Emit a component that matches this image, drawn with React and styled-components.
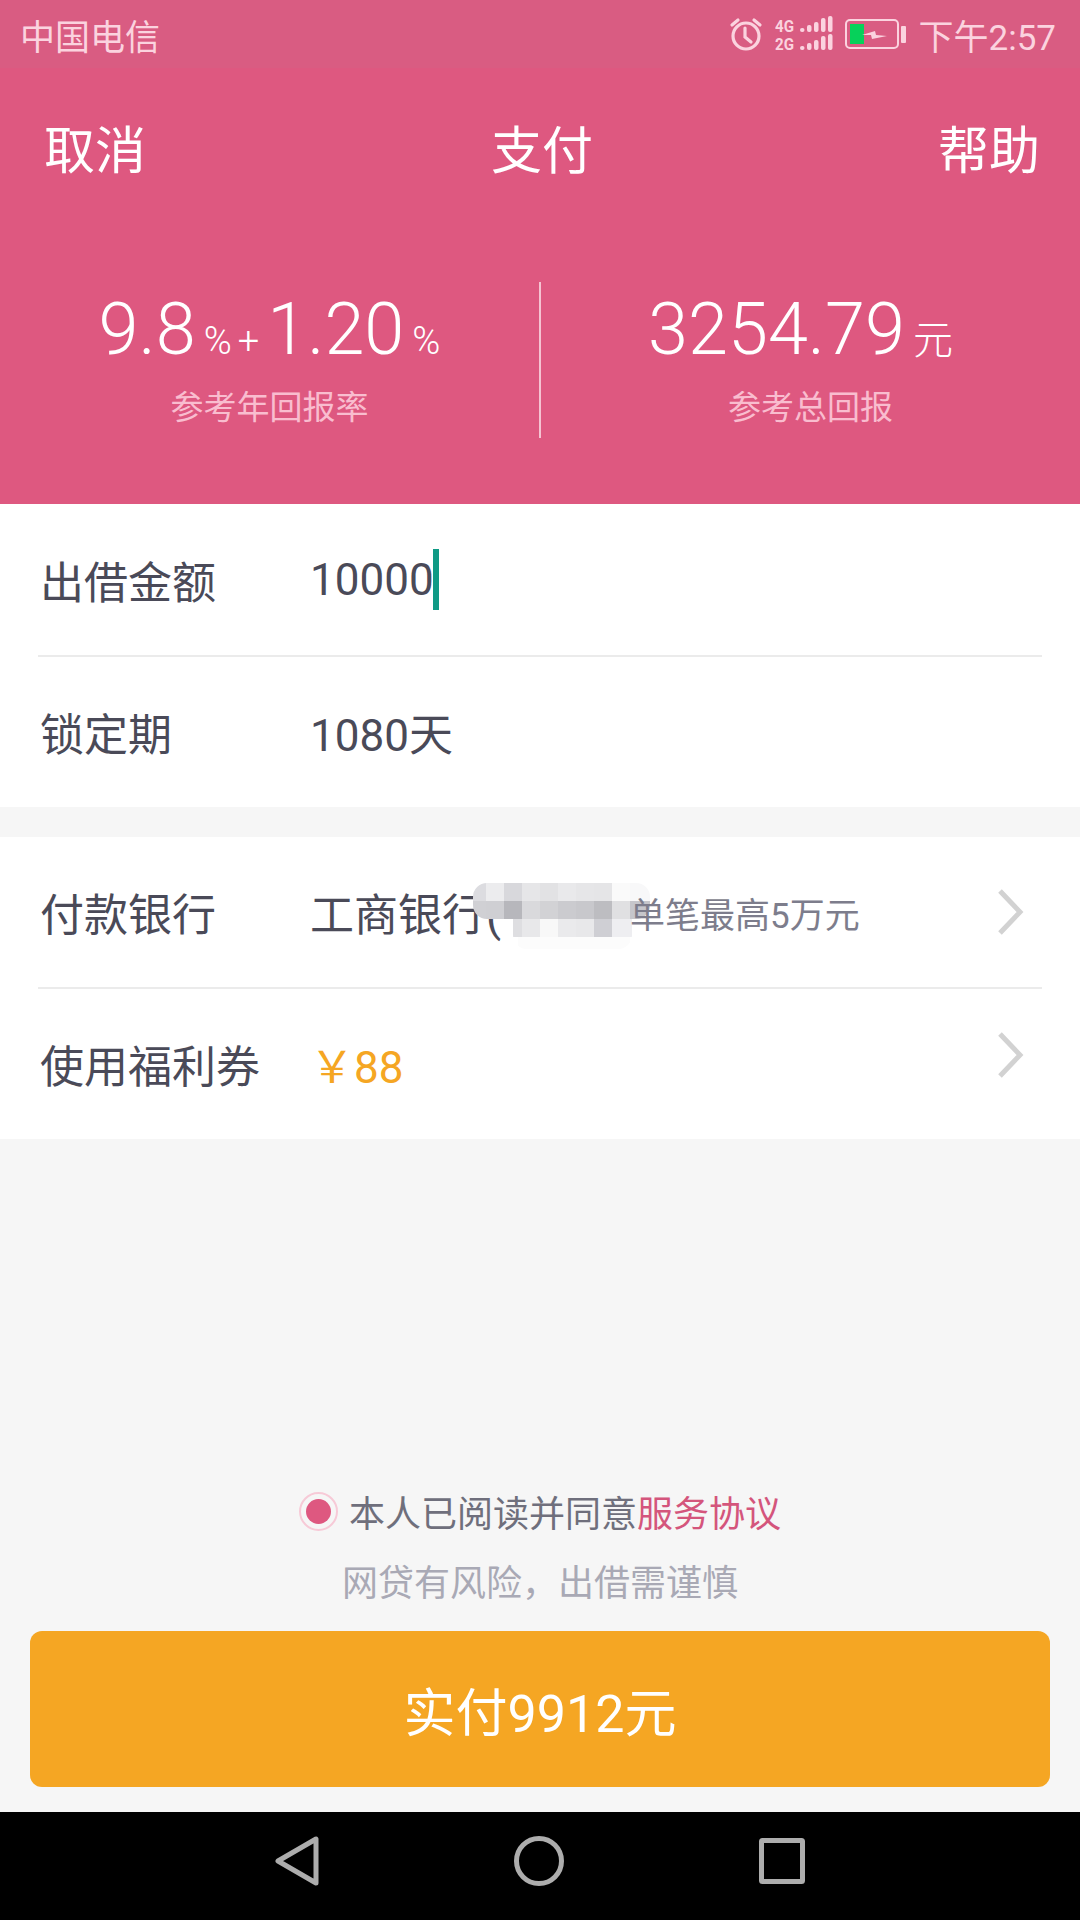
import React from "react";
import styled, { createGlobalStyle } from "styled-components";

const Global = createGlobalStyle`
  html, body { margin: 0; padding: 0; background: #f6f6f6; }
  * { box-sizing: border-box; }
  body { font-family: Roboto, "Noto Sans CJK SC", sans-serif; }
`;

const Screen = styled.div`
  width: 1080px;
  height: 1920px;
  display: flex;
  flex-direction: column;
  background: #f6f6f6;
  overflow: hidden;
`;
const StatusBar = styled.div`
  height: 68px;
  flex: none;
  background: #d95c82;
  color: #fbd3df;
  display: flex;
  align-items: center;
  justify-content: space-between;
  padding: 0 24px 0 20px;
  font-size: 35px;
`;
const StatusRight = styled.div`
  display: flex;
  align-items: center;
  gap: 12px;
`;
const Hero = styled.header`
  height: 436px;
  flex: none;
  background: #de5880;
  color: #fff;
  display: flex;
  flex-direction: column;
`;
const Nav = styled.nav`
  display: flex;
  justify-content: space-between;
  align-items: center;
  padding: 0 40px 0 44px;
  height: 158px;
  font-size: 51px;
`;
const Stats = styled.div`
  display: grid;
  grid-template-columns: 1fr 2px 1fr;
  height: 156px;
  margin-top: 56px;
`;
const Rule = styled.div`
  background: #f5c3d2;
`;
const Stat = styled.div`
  display: flex;
  flex-direction: column;
  align-items: center;
`;
const Figures = styled.div`
  display: flex;
  align-items: baseline;
  height: 96px;
  padding-right: ${(p) => p.$shift || 0}px;
  font-size: 72px;
  line-height: 96px;
  font-weight: 300;
`;
const Unit = styled.span`
  font-size: ${(p) => p.$size || 38}px;
  margin: 0 ${(p) => p.$after || 0}px 0 ${(p) => p.$before || 8}px;
`;
const StatLabel = styled.div`
  font-size: 33px;
  line-height: 44px;
  margin-top: 8px;
  color: #f9bdcf;
`;
const Card = styled.section`
  background: #fff;
  flex: none;
  margin-top: ${(p) => p.$gap || 0}px;
`;
const Row = styled.div`
  position: relative;
  display: flex;
  align-items: center;
  height: ${(p) => p.$h || 150}px;
  padding: 0 0 0 40px;
  font-size: 44px;
  color: #4a4a58;
`;
const Divider = styled.div`
  height: 2px;
  margin: 0 38px;
  background: #ebebeb;
`;
const Label = styled.div`
  width: 270px;
  flex: none;
`;
const Value = styled.div`
  display: flex;
  align-items: center;
  color: ${(p) => p.$color || "#4a4a58"};
`;
const Caret = styled.span`
  width: 6px;
  height: 61px;
  background: #0f9a85;
  margin-left: -1px;
`;
const Note = styled.span`
  position: absolute;
  left: 630px;
  top: 50%;
  transform: translateY(-50%);
  font-size: 35px;
  color: #7d7d8c;
`;
const Mosaic = styled.svg`
  position: absolute;
  left: 473px;
  top: 46px;
`;
const Chevron = styled.svg`
  position: absolute;
  right: 56px;
  top: ${(p) => p.$top}px;
`;
const Footer = styled.footer`
  margin-top: auto;
  flex: none;
  display: flex;
  flex-direction: column;
  align-items: center;
  padding: 0 30px 25px;
`;
const Agree = styled.div`
  display: flex;
  align-items: center;
  gap: 11px;
  height: 40px;
  font-size: 36px;
  color: #6f6f7c;
`;
const Radio = styled.span`
  width: 39px;
  height: 39px;
  border-radius: 50%;
  border: 2px solid #f7cad7;
  display: flex;
  align-items: center;
  justify-content: center;
  &::after {
    content: "";
    width: 25px;
    height: 25px;
    border-radius: 50%;
    background: #de5880;
  }
`;
const Link = styled.span`
  color: #d4557c;
`;
const Warn = styled.div`
  font-size: 36px;
  line-height: 44px;
  margin-top: 31px;
  color: #a9a9b5;
`;
const PayButton = styled.button`
  width: 100%;
  height: 156px;
  margin-top: 25px;
  border: 0;
  border-radius: 12px;
  background: #f5a623;
  color: #fff;
  font: inherit;
  font-size: 52px;
`;
const SoftKeys = styled.div`
  height: 108px;
  flex: none;
  background: #000;
  display: flex;
  align-items: center;
  justify-content: center;
  gap: 195px;
  padding-bottom: 11px;
`;

const Clock = () => (
  <svg width="34" height="34" viewBox="0 0 34 34" fill="none" stroke="#fbd3df" strokeWidth="3.2" strokeLinecap="round">
    <circle cx="17" cy="19" r="13" />
    <path d="M16 11v9l6 5M3 8l6-5M31 8l-6-5" />
  </svg>
);

const SignalBars = ({ y, label }) => (
  <g>
    <text x="0" y={y} fontFamily="Roboto" fontWeight="700" fontSize="17" textLength="19" lengthAdjust="spacingAndGlyphs" fill="#fbd3df">{label}</text>
    {[[25, 4], [32, 7], [39, 10], [46, 14], [53, 16]].map(([x, h]) => (
      <rect key={x} x={x} y={y - h} width="4.5" height={h} rx="2" fill="#fbd3df" />
    ))}
  </g>
);
const Signal = () => (
  <svg width="58" height="36" viewBox="0 0 58 36">
    <SignalBars y={16} label="4G" />
    <SignalBars y={34} label="2G" />
  </svg>
);
const Battery = () => (
  <svg width="62" height="32" viewBox="0 0 62 32" fill="none">
    <rect x="1" y="2" width="52" height="28" rx="4" stroke="#fbd3df" strokeWidth="2" />
    <rect x="5" y="6" width="14" height="20" fill="#06d15a" />
    <path d="M17 17l13-4 1 4 11 1-15 3-1-4z" fill="#fbd3df" />
    <rect x="56" y="8" width="5" height="17" rx="1" fill="#fbd3df" />
  </svg>
);

const mosaicRows = [
  { y: 0, h: 18, x: 0, cells: [[13, "#dcdce0"], [18, "#ececee"], [18, "#d8d8dc"], [18, "#e6e6e8"], [18, "#e2e2e4"], [18, "#e9e9eb"], [18, "#e6e6e8"], [18, "#e5e5e7"], [18, "#fafafa"], [20, "#f8f8f9"]] },
  { y: 18, h: 18, x: 0, cells: [[13, "#d0d0d4"], [18, "#cfcfd3"], [18, "#b7b7bc"], [18, "#d9d9dc"], [18, "#d2d2d5"], [18, "#cbcbcf"], [18, "#c8c8cc"], [18, "#bdbdc1"], [18, "#e0e0e2"], [20, "#c6c6cb"]] },
  { y: 36, h: 18, x: 40, cells: [[9, "#dedee1"], [18, "#e8e8ea"], [18, "#f8f8f8"], [18, "#eaeaec"], [18, "#e8e8ea"], [18, "#cfcfd4"], [20, "#eeeef1"]] },
  { y: 54, h: 12, x: 45, cells: [[112, "#fcfcfc"]] },
];
const BlurPatch = () => (
  <Mosaic width="177" height="68" viewBox="0 0 177 68">
    <defs>
      <clipPath id="patch">
        <rect x="0" y="0" width="177" height="36" rx="14" />
        <rect x="40" y="20" width="119" height="46" rx="14" />
      </clipPath>
    </defs>
    <g clipPath="url(#patch)">
      {mosaicRows.map((row) => {
        let x = row.x;
        return row.cells.map(([w, c]) => {
          const r = <rect key={`${row.y}-${x}`} x={x} y={row.y} width={w} height={row.h} fill={c} />;
          x += w;
          return r;
        });
      })}
    </g>
  </Mosaic>
);

const Arrow = ({ top }) => (
  <Chevron $top={top} width="26" height="46" viewBox="0 0 26 46" fill="none">
    <path d="M2 2l20 21L2 44" stroke="#d2d2d2" strokeWidth="5" />
  </Chevron>
);

export default function App() {
  return (
    <Screen>
      <Global />
      <StatusBar>
        <span>中国电信</span>
        <StatusRight>
          <Clock />
          <Signal />
          <Battery />
          <span>下午2:57</span>
        </StatusRight>
      </StatusBar>
      <Hero>
        <Nav>
          <span>取消</span>
          <span>支付</span>
          <span>帮助</span>
        </Nav>
        <Stats>
          <Stat>
            <Figures>
              9.8<Unit>%</Unit><Unit $before={6} $after={8}>+</Unit>1.20<Unit>%</Unit>
            </Figures>
            <StatLabel>参考年回报率</StatLabel>
          </Stat>
          <Rule />
          <Stat>
            <Figures $shift={20}>
              3254.79<Unit $size={40}>元</Unit>
            </Figures>
            <StatLabel>参考总回报</StatLabel>
          </Stat>
        </Stats>
      </Hero>
      <Card>
        <Row $h={151}>
          <Label>出借金额</Label>
          <Value>10000<Caret /></Value>
        </Row>
        <Divider />
        <Row>
          <Label>锁定期</Label>
          <Value>1080天</Value>
        </Row>
      </Card>
      <Card $gap={30}>
        <Row $h={150}>
          <Label>付款银行</Label>
          <Value>工商银行(</Value>
          <BlurPatch />
          <Note>单笔最高5万元</Note>
          <Arrow top={52} />
        </Row>
        <Divider />
        <Row>
          <Label>使用福利券</Label>
          <Value $color="#f5a623">￥88</Value>
          <Arrow top={43} />
        </Row>
      </Card>
      <Footer>
        <Agree>
          <Radio />
          <span>本人已阅读并同意<Link>服务协议</Link></span>
        </Agree>
        <Warn>网贷有风险，出借需谨慎</Warn>
        <PayButton>实付9912元</PayButton>
      </Footer>
      <SoftKeys>
        <svg width="44" height="50" viewBox="0 0 44 50" fill="none" stroke="#adadad" strokeWidth="5" strokeLinejoin="round">
          <path d="M41 3v44L3 25z" />
        </svg>
        <svg width="50" height="50" viewBox="0 0 50 50" fill="none" stroke="#adadad" strokeWidth="5">
          <circle cx="25" cy="25" r="22.5" />
        </svg>
        <svg width="46" height="46" viewBox="0 0 46 46" fill="none" stroke="#adadad" strokeWidth="5" strokeLinejoin="round">
          <rect x="2.5" y="2.5" width="41" height="41" rx="1" />
        </svg>
      </SoftKeys>
    </Screen>
  );
}
